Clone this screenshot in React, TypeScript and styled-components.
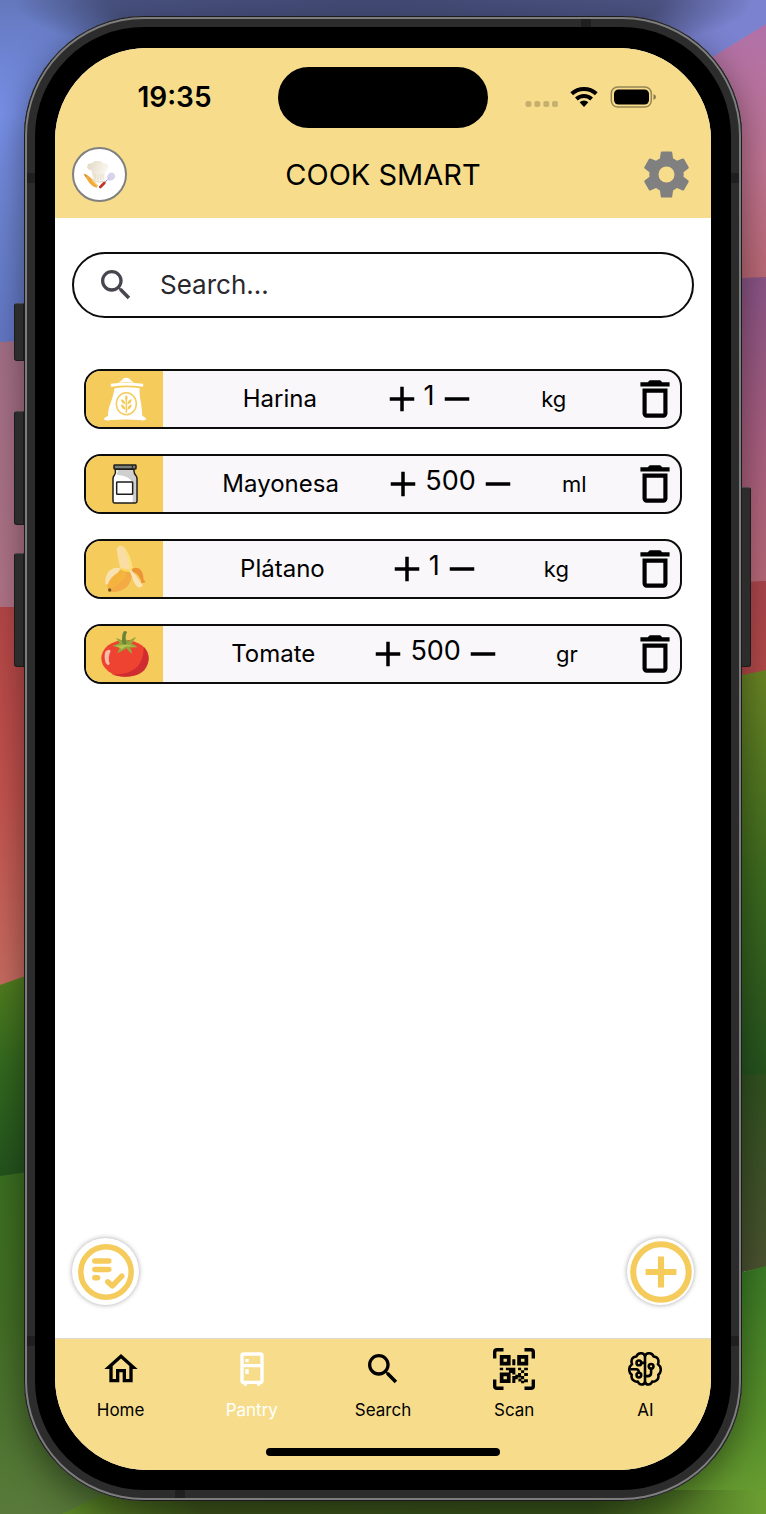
import React from "react";
import styled, { createGlobalStyle } from "styled-components";

const GlobalStyle = createGlobalStyle`
  *, *::before, *::after { box-sizing: border-box; }
  body {
    margin: 0;
    font-family: Inter, "Liberation Sans", sans-serif;
    color: #000;
  }
  button {
    display: inline-flex;
    align-items: center;
    justify-content: center;
    padding: 0;
    border: 0;
    background: none;
    color: inherit;
    font: inherit;
    cursor: pointer;
  }
`;

const colors = {
  cream: "#f7dd8b",
  amber: "#f5cb5c",
  row: "#f9f7f9",
};

/* ---------- desktop and device ---------- */

const Desktop = styled.div`
  position: relative;
  display: flex;
  min-height: 100vh;
  padding: 16px 24px 13px;
  overflow: hidden;
`;

const WallpaperSvg = styled.svg`
  position: absolute;
  inset: 0;
  width: 100%;
  height: 100%;
`;

const Phone = styled.div`
  position: relative;
  display: flex;
  flex: 1;
  min-width: 0;
  padding: 32px 31px 31px;
  border-radius: 120px;
  background: #000;
  box-shadow:
    inset 0 0 0 1px #1c1c1e,
    inset 0 0 0 3px #7c7d7c,
    inset 0 0 0 11px #2c2c2c,
    0 12px 36px rgba(0, 0, 0, 0.45);
`;

const SideKey = styled.span<{ $side: "left" | "right"; $top: number; $height: number }>`
  position: absolute;
  ${(p) => p.$side}: ${(p) => (p.$side === "left" ? -10 : -9)}px;
  top: ${(p) => p.$top}px;
  width: 10px;
  height: ${(p) => p.$height}px;
  border: 1px solid #1b1b1b;
  border-top-color: #4a4a4a;
  border-radius: ${(p) => (p.$side === "left" ? "3px 0 0 3px" : "0 3px 3px 0")};
  background: #2c2c2c;
`;

const Antenna = styled.span<{ $edge: "top" | "bottom" | "left" | "right"; $flip?: boolean }>`
  position: absolute;
  background: #1f1f1f;
  ${(p) =>
    p.$edge === "top" || p.$edge === "bottom"
      ? `width: 10px; height: 8px; ${p.$edge}: 3px; ${p.$edge === "top" ? "right" : "left"}: 151px;`
      : `width: 8px; height: 10px; ${p.$edge}: 3px; ${p.$flip ? "bottom: 155px;" : "top: 157px;"}`}
`;

const Screen = styled.div`
  position: relative;
  display: flex;
  flex-direction: column;
  flex: 1;
  min-width: 0;
  border-radius: 92px;
  overflow: hidden;
  background: #fff;
`;

/* ---------- header ---------- */

const TopArea = styled.header`
  background: ${colors.cream};
`;

const StatusBar = styled.div`
  display: grid;
  grid-template-columns: 1fr 210px 1fr;
  align-items: center;
  height: 98px;
`;

const Clock = styled.time`
  padding-left: 16px;
  text-align: center;
  font-size: 28px;
  line-height: 32px;
  font-weight: 600;
`;

const Island = styled.div`
  height: 61px;
  border-radius: 31px;
  background: #000;
`;

const StatusIcons = styled.div`
  display: flex;
  align-items: center;
  justify-content: center;
  padding-right: 18px;
`;

const TitleBar = styled.div`
  display: flex;
  align-items: center;
  justify-content: space-between;
  padding: 1px 17px 16px;
`;

const Avatar = styled.button`
  width: 55px;
  height: 55px;
  border: 2px solid #808080;
  border-radius: 50%;
  background: #fff;
`;

const Title = styled.h1`
  margin: 0;
  font-size: 29px;
  line-height: 36px;
  font-weight: 400;
`;

const IconButton = styled.button<{ $color?: string }>`
  flex: none;
  color: ${(p) => p.$color ?? "#000"};
`;

/* ---------- pantry ---------- */

const Main = styled.main`
  display: flex;
  flex-direction: column;
  flex: 1;
  padding: 34px 17px 33px;
`;

const SearchBox = styled.label`
  display: flex;
  align-items: center;
  gap: 24px;
  height: 66px;
  padding: 0 22px;
  border: 2px solid #0c0c0c;
  border-radius: 33px;
  color: #49454f;
`;

const SearchInput = styled.input`
  flex: 1;
  min-width: 0;
  padding: 0;
  border: 0;
  outline: 0;
  background: none;
  color: #1d1b20;
  font-family: inherit;
  font-size: 26px;
  line-height: 32px;

  &::placeholder {
    color: #2a282d;
    opacity: 1;
  }
`;

const List = styled.ul`
  display: flex;
  flex-direction: column;
  gap: 25px;
  margin: 51px 12px 0;
  padding: 0;
  list-style: none;
`;

const Row = styled.li`
  display: flex;
  align-items: center;
  justify-content: space-between;
  height: 60px;
  border: 2px solid #0c0c0c;
  border-radius: 17px;
  overflow: hidden;
  background: ${colors.row};
`;

const Thumb = styled.div`
  display: flex;
  align-items: center;
  justify-content: center;
  align-self: stretch;
  width: 77px;
  background: ${colors.amber};
`;

const ItemName = styled.span`
  padding-left: 16px;
  font-size: 24px;
  line-height: 30px;
`;

const Counter = styled.div`
  display: flex;
  align-items: center;
`;

const Amount = styled.output`
  padding: 0 1px 6px;
  font-size: 27px;
  line-height: 30px;
`;

const Unit = styled.span`
  font-size: 22px;
  line-height: 30px;
`;

const Actions = styled.div`
  display: flex;
  justify-content: space-between;
  margin-top: auto;
`;

const FloatingButton = styled.button`
  width: 67px;
  height: 67px;
  border-radius: 50%;
  background: #fff;
  color: ${colors.amber};
  box-shadow: 0 0 5px rgba(0, 0, 0, 0.35);
`;

/* ---------- tab bar ---------- */

const BottomArea = styled.footer`
  display: flex;
  flex-direction: column;
  align-items: center;
  padding-bottom: 14px;
  border-top: 1px solid #dedbd2;
  background: ${colors.cream};
`;

const Tabs = styled.nav`
  display: grid;
  grid-template-columns: repeat(5, 1fr);
  width: 100%;
`;

const Tab = styled.a<{ $active?: boolean }>`
  display: flex;
  flex-direction: column;
  align-items: center;
  gap: 9px;
  padding-top: 9px;
  color: ${(p) => (p.$active ? "#fff" : "#000")};
  font-size: 17px;
  line-height: 22px;
  text-decoration: none;
`;

const TabIcon = styled.span`
  display: flex;
  align-items: center;
  justify-content: center;
  height: 42px;
`;

const HomeIndicator = styled.div`
  width: 234px;
  height: 8px;
  margin-top: 27px;
  border-radius: 4px;
  background: #000;
`;

/* ---------- icons ---------- */

const paths = {
  cog: "M12,15.5A3.5,3.5 0 0,1 8.5,12A3.5,3.5 0 0,1 12,8.5A3.5,3.5 0 0,1 15.5,12A3.5,3.5 0 0,1 12,15.5M19.43,12.97C19.47,12.65 19.5,12.33 19.5,12C19.5,11.67 19.47,11.34 19.43,11L21.54,9.37C21.73,9.22 21.78,8.95 21.66,8.73L19.66,5.27C19.54,5.05 19.27,4.96 19.05,5.05L16.56,6.05C16.04,5.66 15.5,5.32 14.87,5.07L14.5,2.42C14.46,2.18 14.25,2 14,2H10C9.75,2 9.54,2.18 9.5,2.42L9.13,5.07C8.5,5.32 7.96,5.66 7.44,6.05L4.95,5.05C4.73,4.96 4.46,5.05 4.34,5.27L2.34,8.73C2.21,8.95 2.27,9.22 2.46,9.37L4.57,11C4.53,11.34 4.5,11.67 4.5,12C4.5,12.33 4.53,12.65 4.57,12.97L2.46,14.63C2.27,14.78 2.21,15.05 2.34,15.27L4.34,18.73C4.46,18.95 4.73,19.03 4.95,18.95L7.44,17.94C7.96,18.34 8.5,18.68 9.13,18.93L9.5,21.58C9.54,21.82 9.75,22 10,22H14C14.25,22 14.46,21.82 14.5,21.58L14.87,18.93C15.5,18.67 16.04,18.34 16.56,17.94L19.05,18.95C19.27,19.03 19.54,18.95 19.66,18.73L21.66,15.27C21.78,15.05 21.73,14.78 21.54,14.63L19.43,12.97Z",
  magnify:
    "M9.5,3A6.5,6.5 0 0,1 16,9.5C16,11.11 15.41,12.59 14.44,13.73L14.71,14H15.5L20.5,19L19,20.5L14,15.5V14.71L13.73,14.44C12.59,15.41 11.11,16 9.5,16A6.5,6.5 0 0,1 3,9.5A6.5,6.5 0 0,1 9.5,3M9.5,5C7,5 5,7 5,9.5C5,12 7,14 9.5,14C12,14 14,12 14,9.5C14,7 12,5 9.5,5Z",
  plus: "M19,13H13V19H11V13H5V11H11V5H13V11H19V13Z",
  minus: "M19,13H5V11H19V13Z",
  trash:
    "M6,19A2,2 0 0,0 8,21H16A2,2 0 0,0 18,19V7H6V19M8,9H16V19H8V9M15.5,4L14.5,3H9.5L8.5,4H5V6H19V4H15.5Z",
  home: "M12 5.69L17 10.19V18H15V12H9V18H7V10.19L12 5.69M12 3L2 12H5V20H11V14H13V20H19V12H22L12 3Z",
  fridge:
    "M9,21V22H7V21A2,2 0 0,1 5,19V4A2,2 0 0,1 7,2H17A2,2 0 0,1 19,4V19A2,2 0 0,1 17,21V22H15V21H9M7,4V9H17V4H7M7,19H17V11H7V19M8,12H10V15H8V12M8,6H10V8H8V6Z",
  plusCircle:
    "M12,20C7.59,20 4,16.41 4,12C4,7.59 7.59,4 12,4C16.41,4 20,7.59 20,12C20,16.41 16.41,20 12,20M12,2A10,10 0 0,0 2,12A10,10 0 0,0 12,22A10,10 0 0,0 22,12A10,10 0 0,0 12,2M13,7H11V11H7V13H11V17H13V13H17V11H13V7Z",
};

function Icon({ name, size }: { name: keyof typeof paths; size: number }) {
  return (
    <svg width={size} height={size} viewBox="0 0 24 24" fill="currentColor" display="block" style={{ flex: "none" }} aria-hidden>
      <path d={paths[name]} />
    </svg>
  );
}

function ChecklistIcon() {
  return (
    <svg width="56" height="56" viewBox="-28 -28 56 56" fill="none" stroke="currentColor" strokeLinecap="round" strokeLinejoin="round" strokeWidth="5.5" aria-hidden>
      <circle r="25.2" />
      <path d="M-11.2 -11H2.8M-11.2 -2.6H2.8M-11.2 5.8H-8.4M1.8 9.8L6.4 13.8L15.8 4.2" />
    </svg>
  );
}

function QrScanIcon() {
  return (
    <svg width="42" height="42" viewBox="0 0 124 124" fill="currentColor" aria-hidden>
      <path
        d="M5 31V12Q5 5 12 5H31M93 5H112Q119 5 119 12V31M119 93V112Q119 119 112 119H93M31 119H12Q5 119 5 112V93"
        fill="none"
        stroke="currentColor"
        strokeWidth="10"
      />
      <path d="M25.5 26H46.500V46H25.5ZM77 26H98.500V46H77ZM25.5 78H46.500V98H25.5Z" fill="none" stroke="currentColor" strokeWidth="11" />
      <path d="M57 33h9v18h-9zM20 58h10v8h-10zM38 58h28v8h-28zM47 66h19v8h-19zM57 66h9v12h-9zM74 58h9v8h-9zM83 66h9v8h-9zM92 58h11v8h-11zM74 74h9v9h-9zM66 79h17v8h-17zM57 83h16v9h-16zM57 83h9v20h-9zM92 74h11v9h-11zM83 83h9v9h-9zM92 92h11v9h-11zM75 90h9v9h-9zM83 97h9v7h-9z" />
    </svg>
  );
}

function BrainIcon() {
  return (
    <svg width="34" height="34" viewBox="0 0 100 100" fill="none" stroke="currentColor" strokeWidth="7.500" strokeLinecap="round" strokeLinejoin="round" aria-hidden>
      <path d="M50 10V90" />
      <path d="M50 11C46 1 29 1 25 13C14 13 7 23 12 36C1 43 1 60 11 67C8 79 17 89 29 87C33 98 47 98 50 89" />
      <path d="M50 11C54 1 71 1 75 13C86 13 93 23 88 36C99 43 99 60 89 67C92 79 83 89 71 87C67 98 53 98 50 89" />
      <circle cx="32" cy="32" r="7" />
      <path d="M39 32H50" />
      <circle cx="32" cy="68" r="7" />
      <path d="M10 51H24Q32 51 32 61" />
      <circle cx="68" cy="42" r="7" />
      <path d="M68 49V60Q68 71 58 71H50" />
    </svg>
  );
}

function StatusGlyphs() {
  return (
    <svg width="132" height="24" viewBox="0 0 132 24" aria-hidden>
      <g fill="#000" fillOpacity="0.2">
        <rect x="0.500" y="16" width="6" height="6" rx="2" />
        <rect x="9.300" y="16" width="6" height="6" rx="2" />
        <rect x="18.300" y="16" width="6" height="6" rx="2" />
        <rect x="27" y="16" width="6" height="6" rx="2" />
      </g>
      <g fill="none" stroke="#000" strokeWidth="4">
        <path d="M46.700 8.800A18 18 0 0 1 71.300 8.800" />
        <path d="M51.400 14A11 11 0 0 1 66.600 14" />
      </g>
      <path d="M54.600 17.300A6.500 6.500 0 0 1 63.400 17.300L59 22Z" />
      <rect x="86.300" y="1.900" width="40" height="20.200" rx="6.500" fill="none" stroke="#000" strokeOpacity="0.4" strokeWidth="1.500" />
      <rect x="89" y="4.500" width="35" height="15" rx="4.500" />
      <path d="M128.500 9Q131 9.800 131 12T128.500 15Z" fillOpacity="0.45" />
    </svg>
  );
}

function ChefLogo() {
  return (
    <svg width="33" height="28" viewBox="0 0 99 84" aria-hidden>
      <defs>
        <linearGradient id="hat" x1="0" y1="0" x2="1" y2="0.400">
          <stop offset="0" stopColor="#e0d6c2" />
          <stop offset="0.500" stopColor="#efe8da" />
          <stop offset="1" stopColor="#fbf8f2" />
        </linearGradient>
      </defs>
      <path d="M2 38Q14 40 28 55L44 74L41 80Q24 76 15 60Z" fill="#f0a93a" />
      <path d="M2 38L12 44L8 49Z" fill="#d9822c" />
      <path d="M28 58L44 74" stroke="#f8cf74" strokeWidth="4" />
      <path d="M74 56L58 71" stroke="#7d84c4" strokeWidth="3" />
      <ellipse cx="84" cy="47" rx="13" ry="11" transform="rotate(-42 84 47)" fill="#ddd8ee" />
      <path d="M92 38L74 56M82 36L76 54M95 48L76 56" stroke="#c3bce0" strokeWidth="1.500" />
      <path d="M64 66L52 78" stroke="#bf3527" strokeWidth="8" strokeLinecap="round" />
      <path d="M25 28C8 28 8 5 27 7C34 -3 54 -3 60 7C74 4 82 16 73 27L67 35L66 60Q48 68 31 59Z" fill="url(#hat)" />
      <path d="M37 38V56M45 40V58M53 40V58M60 38V56" stroke="#e0d5bd" strokeWidth="2" />
      <path d="M30 59Q48 68 66 60" stroke="#d9ccb0" strokeWidth="2" fill="none" />
    </svg>
  );
}

function FlourIcon() {
  return (
    <svg width="44" height="44" viewBox="0 0 132 132" aria-hidden>
      <g fill="#fff">
        <path d="M46 17Q58 9 60 5Q69 -1 80 5Q82 10 93 17Q69 14 46 17Z" />
        <path d="M24 20Q69 14 120 20Q123 24 119 29Q70 22 25 29Q21 25 24 20Z" />
        <path d="M35 34Q70 27 110 34Q108 52 114 78Q117 100 118 117Q128 120 130 127Q126 132 109 129Q69 126 25 129Q6 132 2 127Q5 119 15 117Q14 100 24 75Q32 52 35 34Z" />
      </g>
      <g fill="none" stroke={colors.amber} strokeWidth="4.500">
        <ellipse cx="70" cy="80" rx="30" ry="33" />
        <path d="M70 60V107" />
      </g>
      <g fill={colors.amber}>
        <path d="M70 54Q62 63 70 71Q78 63 70 54ZM67 82Q54 80 54 67Q66 69 67 82ZM73 82Q86 80 86 67Q74 69 73 82ZM67 98Q54 96 54 82Q66 85 67 98ZM73 98Q86 96 86 82Q74 85 73 98Z" />
      </g>
    </svg>
  );
}

function JarIcon() {
  return (
    <svg width="26" height="40" viewBox="0 0 78 120" strokeLinejoin="round" aria-hidden>
      <path d="M10 16H64Q66 29 72 35Q75 39 75 44V112Q75 117 70 117H7Q3 117 3 112V44Q3 38 7 34Q12 27 10 16Z" fill="#fff" />
      <path d="M18 18H62Q64 30 73 38V116H62V58Q56 36 14 32Z" fill="#cfcfcf" />
      <path d="M10 16H65Q66 29 72 35Q75 39 75 44V112Q75 117 70 117H7Q3 117 3 112V44Q3 38 7 34Q12 27 10 16Z" fill="none" stroke="#1d1d1b" strokeWidth="4.500" />
      <rect x="6" y="3" width="66" height="12" rx="2" fill="#7a7e79" stroke="#1d1d1b" strokeWidth="4.500" />
      <path d="M61 4V14" stroke="#1d1d1b" strokeWidth="3" />
      <rect x="14" y="54" width="48" height="37" rx="2" fill="#fff" stroke="#1d1d1b" strokeWidth="4.500" />
    </svg>
  );
}

function BananaIcon() {
  return (
    <svg width="42" height="48" viewBox="0 0 126 144" aria-hidden>
      <path d="M84 71C105 62 119 78 118 102L125 112L112 115Q111 91 84 79Z" fill="#ed9434" />
      <path d="M62 72Q87 62 84 91C80 123 58 144 18 141L13 132Q36 122 42 101Q47 79 62 72Z" fill="#f4ab45" />
      <path d="M56 74Q47 110 16 134Q30 128 47 114Q69 98 66 74Z" fill="#f4b63d" />
      <path d="M62 73Q28 67 13 102Q5 128 17 136Q43 122 49 96Z" fill="#f3b33e" />
      <path d="M38 13Q41 1 51 2Q63 2 69 22L86 70Q72 82 48 69Q41 35 38 13Z" fill="#f9dda3" />
      <path d="M60 8Q72 27 78 69L86 71Q81 26 60 8Z" fill="#fbe276" />
      <path d="M47 66Q66 77 84 70L84 80Q64 83 47 73Z" fill="#fad85d" />
      <path d="M50 70Q27 64 11 83Q3 96 4 118L12 118Q17 98 43 82Z" fill="#fae1b1" />
      <path d="M75 72Q90 80 99 96L117 122L105 128Q91 121 84 96Z" fill="#fae3b5" />
      <circle cx="17" cy="135" r="5" fill="#7b5424" />
    </svg>
  );
}

function TomatoIcon() {
  return (
    <svg width="48" height="46" viewBox="0 0 144 138" aria-hidden>
      <ellipse cx="72" cy="82" rx="71" ry="55" fill="#ee4331" />
      <path d="M128 47Q143 61 143 84C140 122 112 137 72 137Q48 137 32 130C88 133 130 109 128 47Z" fill="#cf2d31" />
      <path d="M13 62Q24 51 29 60Q19 80 26 98Q22 107 14 95Q8 76 13 62Z" fill="#f9bca8" />
      <path d="M34 44Q48 41 56 36L44 21Q57 23 67 31Q75 24 81 27L79 34Q98 19 106 19Q95 31 92 38Q105 42 109 49Q96 50 87 49Q93 59 93 69Q82 61 76 51Q68 58 49 67Q54 54 57 49Q45 50 34 44Z" fill="#94a83b" />
      <path d="M45 44Q65 44 73 39L102 47L76 46L62 54Z" fill="#b9c64d" />
      <path d="M64 37Q61 10 69 1Q73 -1 78 3Q70 20 78 39Q70 44 64 37Z" fill="#68853a" />
    </svg>
  );
}

function Wallpaper() {
  const gradients: [string, string[]][] = [
    ["blueLeft", ["#6478bd", "#7890e8", "#6c83d0", "#6277c6"]],
    ["mauve", ["#a36f86", "#b07487"]],
    ["redLeft", ["#b54647", "#c4534e", "#c96d61"]],
    ["greenDark", ["#5f8a24", "#58831f", "#33691f", "#24541e"]],
    ["greenLeft", ["#39701f", "#436f25", "#58793a"]],
    ["pink", ["#b071a8", "#c17593", "#bb6770"]],
    ["purple", ["#8b5587", "#a95f80", "#b86875"]],
    ["redRight", ["#a9444b", "#b94c46"]],
    ["olive", ["#6a8525", "#3e6b1f", "#25531f"]],
    ["moss", ["#31521f", "#565438"]],
    ["greenRight", ["#3b7b26", "#548e2a", "#6a9e31"]],
  ];
  return (
    <WallpaperSvg viewBox="0 0 766 1514" preserveAspectRatio="none" aria-hidden>
      <defs>
        {gradients.map(([id, stops]) => (
          <linearGradient key={id} id={id} x1="0" y1="0" x2="0" y2="1">
            {stops.map((stop, i) => (
              <stop key={i} offset={i / (stops.length - 1)} stopColor={stop} />
            ))}
          </linearGradient>
        ))}
        <radialGradient id="topShade">
          <stop offset="0" stopColor="#434b75" />
          <stop offset="0.750" stopColor="#434b75" stopOpacity="0.850" />
          <stop offset="1" stopColor="#434b75" stopOpacity="0" />
        </radialGradient>
        <linearGradient id="bottomStrip" x1="0" y1="0" x2="1" y2="0">
          <stop offset="0" stopColor="#5d8926" />
          <stop offset="0.200" stopColor="#3f571c" />
          <stop offset="0.750" stopColor="#3a561b" />
          <stop offset="1" stopColor="#6a9e31" />
        </linearGradient>
      </defs>
      <rect width="383" height="345" fill="url(#blueLeft)" />
      <path d="M0 342L383 322V607H0Z" fill="url(#mauve)" />
      <path d="M0 607H383V850L0 986Z" fill="url(#redLeft)" />
      <path d="M0 985L383 850V1120L0 1177Z" fill="url(#greenDark)" />
      <path d="M0 1176L383 1120V1514H0Z" fill="url(#greenLeft)" />
      <rect x="383" width="383" height="300" fill="#7b82cf" />
      <ellipse cx="383" cy="0" rx="370" ry="70" fill="url(#topShade)" />
      <path d="M766 24L383 260V300L766 278Z" fill="url(#pink)" />
      <path d="M383 295L766 277V582L383 600Z" fill="url(#purple)" />
      <path d="M383 600L766 581V671L383 750Z" fill="url(#redRight)" />
      <path d="M383 750L766 670V1080H383Z" fill="url(#olive)" />
      <path d="M383 1080L766 1074V1267L383 1350Z" fill="url(#moss)" />
      <path d="M383 1365L766 1266V1514H383Z" fill="url(#greenRight)" />
      <path d="M62 1514L112 1490H766V1514Z" fill="url(#bottomStrip)" />
    </WallpaperSvg>
  );
}

/* ---------- data ---------- */

const items = [
  { name: "Harina", amount: 1, unit: "kg", picture: <FlourIcon /> },
  { name: "Mayonesa", amount: 500, unit: "ml", picture: <JarIcon /> },
  { name: "Plátano", amount: 1, unit: "kg", picture: <BananaIcon /> },
  { name: "Tomate", amount: 500, unit: "gr", picture: <TomatoIcon /> },
];

const tabs = [
  { label: "Home", icon: <Icon name="home" size={40} /> },
  { label: "Pantry", icon: <Icon name="fridge" size={40} />, active: true },
  { label: "Search", icon: <Icon name="magnify" size={40} /> },
  { label: "Scan", icon: <QrScanIcon /> },
  { label: "AI", icon: <BrainIcon /> },
];

export default function App() {
  return (
    <>
      <GlobalStyle />
      <Desktop>
        <Wallpaper />
        <Phone>
          <SideKey $side="left" $top={287} $height={58} />
          <SideKey $side="left" $top={395} $height={114} />
          <SideKey $side="left" $top={537} $height={114} />
          <SideKey $side="right" $top={471} $height={180} />
          <Antenna $edge="top" />
          <Antenna $edge="bottom" />
          <Antenna $edge="left" />
          <Antenna $edge="right" />
          <Antenna $edge="left" $flip />
          <Antenna $edge="right" $flip />
          <Screen>
            <TopArea>
              <StatusBar>
                <Clock>19:35</Clock>
                <Island />
                <StatusIcons>
                  <StatusGlyphs />
                </StatusIcons>
              </StatusBar>
              <TitleBar>
                <Avatar aria-label="Profile">
                  <ChefLogo />
                </Avatar>
                <Title>COOK SMART</Title>
                <IconButton $color="#808080" aria-label="Settings">
                  <Icon name="cog" size={55} />
                </IconButton>
              </TitleBar>
            </TopArea>
            <Main>
              <SearchBox>
                <Icon name="magnify" size={40} />
                <SearchInput type="text" placeholder="Search..." aria-label="Search" />
              </SearchBox>
              <List>
                {items.map((item) => (
                  <Row key={item.name}>
                    <Thumb>{item.picture}</Thumb>
                    <ItemName>{item.name}</ItemName>
                    <Counter>
                      <IconButton aria-label={`Add ${item.name}`}>
                        <Icon name="plus" size={42} />
                      </IconButton>
                      <Amount>{item.amount}</Amount>
                      <IconButton aria-label={`Remove ${item.name}`}>
                        <Icon name="minus" size={42} />
                      </IconButton>
                    </Counter>
                    <Unit>{item.unit}</Unit>
                    <IconButton aria-label={`Delete ${item.name}`}>
                      <Icon name="trash" size={50} />
                    </IconButton>
                  </Row>
                ))}
              </List>
              <Actions>
                <FloatingButton aria-label="Shopping list">
                  <ChecklistIcon />
                </FloatingButton>
                <FloatingButton aria-label="Add item">
                  <Icon name="plusCircle" size={74} />
                </FloatingButton>
              </Actions>
            </Main>
            <BottomArea>
              <Tabs>
                {tabs.map((tab) => (
                  <Tab key={tab.label} href="#" $active={tab.active} aria-current={tab.active ? "page" : undefined}>
                    <TabIcon>{tab.icon}</TabIcon>
                    {tab.label}
                  </Tab>
                ))}
              </Tabs>
              <HomeIndicator />
            </BottomArea>
          </Screen>
        </Phone>
      </Desktop>
    </>
  );
}
